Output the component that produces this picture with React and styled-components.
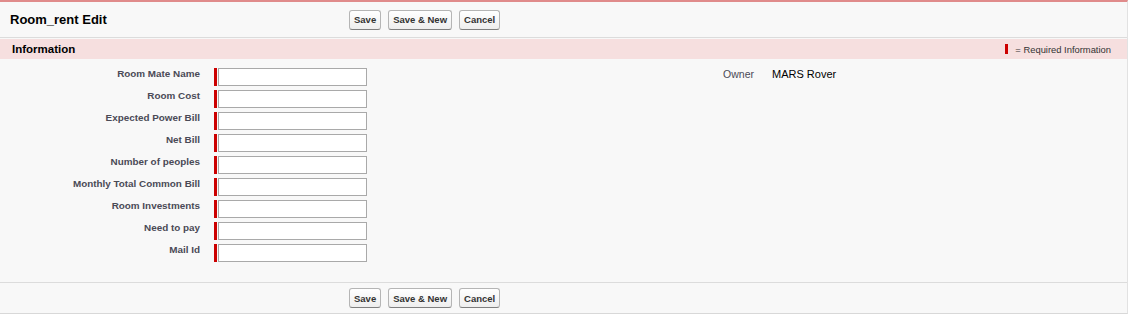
import React from "react";
import styled, { createGlobalStyle } from "styled-components";

const Global = createGlobalStyle`
  html, body { margin: 0; padding: 0; background: #fff; }
  body { font-family: Arial, "Liberation Sans", Helvetica, sans-serif; color: #222; }
`;

const Panel = styled.div`
  width: 1127px;
  background: #f8f8f8;
  border-top: 2px solid #e08b8b;
  border-right: 1px solid #e2e2e2;
  border-bottom: 1px solid #d8d8d8;
`;

const ButtonBar = styled.div`
  display: grid;
  grid-template-columns: 349px 1fr;
  align-items: center;
  height: ${(p) => p.$h}px;
  border-top: ${(p) => (p.$top ? "1px solid #dcdcdc" : "none")};
  border-bottom: ${(p) => (p.$bottom ? "1px solid #dcdcdc" : "none")};
  box-sizing: border-box;
`;

const Title = styled.h2`
  margin: 0;
  padding-left: 10px;
  font-size: 13px;
  font-weight: bold;
  color: #000;
`;

const Buttons = styled.div`
  display: flex;
  gap: 7px;
`;

const Btn = styled.button`
  height: 20px;
  padding: 0 4px;
  font-family: Arial, "Liberation Sans", sans-serif;
  font-size: 9.5px;
  font-weight: bold;
  color: #333;
  background: linear-gradient(#ffffff, #eeeeee);
  border: 1px solid #b5b5b5;
  border-bottom-color: #7f7f7f;
  border-radius: 3px;
  cursor: pointer;
`;

const SectionHead = styled.div`
  margin-top: 1px;
  height: 20px;
  background: #f6dfdf;
  display: flex;
  align-items: center;
  justify-content: space-between;
  padding: 0 16px 0 12px;
`;

const SectionTitle = styled.h3`
  margin: 0;
  font-size: 11.5px;
  font-weight: bold;
  color: #000;
`;

const Legend = styled.span`
  display: flex;
  align-items: center;
  gap: 7px;
  font-size: 9.4px;
  color: #333;
`;

const RedBar = styled.span`
  display: inline-block;
  width: 3px;
  height: ${(p) => p.$h}px;
  background: #c00;
  flex: none;
`;

const Body = styled.div`
  display: grid;
  grid-template-columns: 204px 360px 203px 1fr;
  row-gap: 4px;
  padding: 9px 0 20px;
`;

const Label = styled.label`
  text-align: right;
  font-size: ${(p) => (p.$plain ? 10.5 : 9.9)}px;
  font-weight: ${(p) => (p.$plain ? "normal" : "bold")};
  color: #4a4a56;
  padding: 0 ${(p) => p.$pr}px 0 0;
  line-height: 12px;
`;

const DataCell = styled.div`
  display: flex;
  align-items: flex-start;
  padding-left: ${(p) => p.$pl}px;
  font-size: 11px;
  color: #000;
  line-height: 12px;
`;

const Input = styled.input`
  width: 149px;
  height: 18px;
  box-sizing: border-box;
  margin: 0 0 0 1px;
  border: 1px solid #a9a9a9;
  background: #fff;
  padding: 0 2px;
`;

const Empty = styled.div``;

const fields = [
  "Room Mate Name",
  "Room Cost",
  "Expected Power Bill",
  "Net Bill",
  "Number of peoples",
  "Monthly Total Common Bill",
  "Room Investments",
  "Need to pay",
  "Mail Id",
];

const ActionButtons = () => (
  <Buttons>
    <Btn>Save</Btn>
    <Btn>Save &amp; New</Btn>
    <Btn>Cancel</Btn>
  </Buttons>
);

export default function App() {
  return (
    <>
      <Global />
      <Panel>
        <ButtonBar $h={36} $bottom>
          <Title>Room_rent Edit</Title>
          <ActionButtons />
        </ButtonBar>
        <SectionHead>
          <SectionTitle>Information</SectionTitle>
          <Legend>
            <RedBar $h={10} />= Required Information
          </Legend>
        </SectionHead>
        <Body>
          {fields.map((f, i) => (
            <React.Fragment key={f}>
              <Label $pr={4}>{f}</Label>
              <DataCell $pl={10}>
                <RedBar $h={18} />
                <Input type="text" />
              </DataCell>
              {i === 0 ? (
                <>
                  <Label $plain $pr={13}>Owner</Label>
                  <DataCell $pl={5}>MARS Rover</DataCell>
                </>
              ) : (
                <>
                  <Empty />
                  <Empty />
                </>
              )}
            </React.Fragment>
          ))}
        </Body>
        <ButtonBar $h={31} $top>
          <span />
          <ActionButtons />
        </ButtonBar>
      </Panel>
    </>
  );
}
